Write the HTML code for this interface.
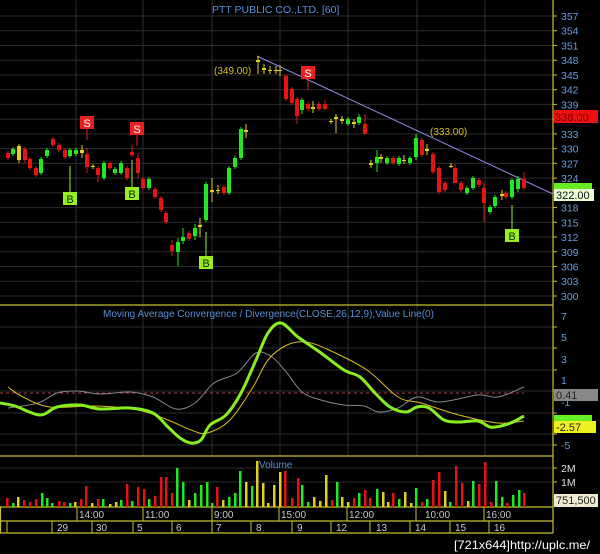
<!DOCTYPE html>
<html><head><meta charset="utf-8"><style>
html,body{margin:0;padding:0;background:#000;width:600px;height:554px;overflow:hidden}
svg{display:block}
text{font-family:"Liberation Sans",sans-serif}
</style></head><body>
<svg id="s" width="600" height="554" viewBox="0 0 600 554" xmlns="http://www.w3.org/2000/svg">
<rect width="600" height="554" fill="#000"/>
<g id="grid" stroke="#2e2e2e" stroke-width="1"></g>
<g stroke="#c8c030" stroke-width="1.2" fill="none">
<line x1="553" y1="0" x2="553" y2="533"/>
<line x1="0" y1="305" x2="553" y2="305"/>
<line x1="0" y1="456" x2="553" y2="456"/>
<line x1="0" y1="507" x2="553" y2="507"/>
<line x1="0" y1="521" x2="553" y2="521"/>
<line x1="0" y1="533" x2="553" y2="533"/>
<line x1="0.5" y1="507" x2="0.5" y2="533"/>
</g>
<g id="axt" stroke="#c8c030" stroke-width="1"></g>
<text x="212" y="13" font-size="10.5" fill="#5a8fd8">PTT PUBLIC CO.,LTD. [60]</text>
<line x1="257" y1="56" x2="553" y2="194" stroke="#8a8ae0" stroke-width="1"/>
<text x="214" y="74" font-size="10" fill="#d8c020">(349.00)</text>
<text x="430" y="135" font-size="10" fill="#d8c020">(333.00)</text>
<g id="cand"></g>
<g stroke="#99ee22" stroke-width="1">
<line x1="70" y1="166" x2="70" y2="192"/><line x1="132" y1="160" x2="132" y2="187"/>
<line x1="206" y1="232" x2="206" y2="256"/><line x1="512" y1="205" x2="512" y2="229"/>
</g>
<g fill="#99ee22"><rect x="63" y="192" width="14" height="13"/><rect x="125" y="187" width="14" height="13"/><rect x="199" y="256" width="14" height="13"/><rect x="505" y="229" width="14" height="13"/></g>
<g font-size="11" fill="#0a2a00" text-anchor="middle"><text x="70" y="203">B</text><text x="132" y="198">B</text><text x="206" y="267">B</text><text x="512" y="240">B</text></g>
<g stroke="#e82020"><line x1="87" y1="129" x2="87" y2="140"/><line x1="137" y1="135" x2="137" y2="146"/><line x1="308" y1="79" x2="308" y2="90"/></g>
<g fill="#e82020"><rect x="80" y="116" width="14" height="13"/><rect x="130" y="122" width="14" height="13"/><rect x="301" y="66" width="14" height="13"/></g>
<g font-size="11" fill="#fff" text-anchor="middle"><text x="87" y="127">S</text><text x="137" y="133">S</text><text x="308" y="77">S</text></g>
<g id="plab" font-size="10.5" fill="#6a9ee0"></g>
<rect x="554" y="110" width="44" height="13" fill="#ee1010"/>
<text x="555" y="121" font-size="11" fill="#700">338.00</text>
<rect x="554" y="183" width="38" height="7" fill="#66ee22"/>
<rect x="554" y="189" width="40" height="12" fill="#e8ffd8"/>
<text x="556" y="199" font-size="11" fill="#111">322.00</text>
<text x="103" y="317" font-size="10" fill="#5a8fd8">Moving Average Convergence / Divergence(CLOSE,26,12,9),Value Line(0)</text>
<line x1="0" y1="393" x2="524" y2="393" stroke="#b04050" stroke-width="1" stroke-dasharray="3,3"/>
<path id="pg" fill="none" stroke="#888" stroke-width="1"/>
<path id="py" fill="none" stroke="#d8c020" stroke-width="1"/>
<path id="pm" fill="none" stroke="#88ee22" stroke-width="3" stroke-linejoin="round"/>
<g font-size="10.5" fill="#6a9ee0"><text x="561" y="320">7</text><text x="561" y="341">5</text><text x="561" y="363">3</text><text x="561" y="384">1</text><text x="561" y="406">-1</text><text x="561" y="449">-5</text></g>
<rect x="554" y="389" width="44" height="12" fill="#888"/>
<text x="556" y="399" font-size="11" fill="#222">0.41</text>
<rect x="554" y="415" width="38" height="7" fill="#66ee22"/>
<rect x="554" y="421" width="42" height="12" fill="#f0f020"/>
<text x="556" y="431" font-size="11" fill="#222">-2.57</text>
<text x="259" y="468" font-size="10" fill="#5a8fd8">Volume</text>
<g id="vol"></g>
<g font-size="10.5" fill="#e0e0e0"><text x="561" y="472">2M</text><text x="561" y="486">1M</text></g>
<rect x="554" y="494" width="44" height="13" fill="#f0ead0"/>
<text x="556" y="504" font-size="11" fill="#222">751,500</text>
<g stroke="#c8c030" stroke-width="1">
<line x1="77" y1="507" x2="77" y2="521"/><line x1="143" y1="507" x2="143" y2="521"/><line x1="212" y1="507" x2="212" y2="533"/><line x1="279" y1="507" x2="279" y2="521"/><line x1="347" y1="507" x2="347" y2="521"/><line x1="416" y1="507" x2="416" y2="521"/><line x1="484" y1="507" x2="484" y2="521"/>
<line x1="7" y1="521" x2="7" y2="533"/><line x1="52" y1="521" x2="52" y2="533"/><line x1="92" y1="521" x2="92" y2="533"/><line x1="133" y1="521" x2="133" y2="533"/><line x1="172" y1="521" x2="172" y2="533"/><line x1="251" y1="521" x2="251" y2="533"/><line x1="292" y1="521" x2="292" y2="533"/><line x1="331" y1="521" x2="331" y2="533"/><line x1="370" y1="521" x2="370" y2="533"/><line x1="410" y1="521" x2="410" y2="533"/><line x1="450" y1="521" x2="450" y2="533"/><line x1="489" y1="521" x2="489" y2="533"/>
</g>
<g font-size="10" fill="#c8c8c8"><text x="79" y="518">14:00</text><text x="145" y="518">11:00</text><text x="214" y="518">9:00</text><text x="281" y="518">15:00</text><text x="349" y="518">12:00</text><text x="425" y="518">10:00</text><text x="486" y="518">16:00</text>
<text x="57" y="531">29</text><text x="96" y="531">30</text><text x="137" y="531">5</text><text x="176" y="531">6</text><text x="216" y="531">7</text><text x="256" y="531">8</text><text x="297" y="531">9</text><text x="336" y="531">12</text><text x="376" y="531">13</text><text x="415" y="531">14</text><text x="455" y="531">15</text><text x="494" y="531">16</text></g>
<text x="454" y="549" font-size="12" fill="#fff" font-family="Liberation Mono,monospace" textLength="136" lengthAdjust="spacingAndGlyphs">[721x644]http://uplc.me/</text>
</svg>
<script>
var NS="http://www.w3.org/2000/svg";
function el(p,t,a){var e=document.createElementNS(NS,t);for(var k in a)e.setAttribute(k,a[k]);document.getElementById(p).appendChild(e);return e;}
function smooth(id,pts){var p=pts.split(' ').map(function(q){return q.split(',').map(Number);});var d='M'+p[0][0]+','+p[0][1];
for(var i=0;i<p.length-1;i++){var p0=p[i-1]||p[i],p1=p[i],p2=p[i+1],p3=p[i+2]||p2;
d+=' C'+(p1[0]+(p2[0]-p0[0])/6)+','+(p1[1]+(p2[1]-p0[1])/6)+' '+(p2[0]-(p3[0]-p1[0])/6)+','+(p2[1]-(p3[1]-p1[1])/6)+' '+p2[0]+','+p2[1];}
document.getElementById(id).setAttribute('d',d);}
smooth('pg',"8,408 38,403 57,393 77,391 100,394 130,392 153,397 176,409 195,403 214,383 237,373 256,353 272,357 287,373 302,392 321,400 344,405 364,406 379,412 398,408 417,397 440,402 478,395 498,397 524,387");
smooth('py',"8,387 23,397 50,407 96,406 138,410 168,420 191,430 207,433 230,420 253,387 268,360 287,345 306,342 329,350 367,370 398,397 421,403 459,415 498,423 524,421");
smooth('pm',"0,403 15,406 40,415 57,407 80,405 100,409 130,408 153,413 168,427 180,438 191,443 201,440 210,425 226,415 241,393 256,360 268,333 281,323 298,337 321,353 344,370 360,377 375,393 390,407 406,412 417,407 429,408 444,420 459,422 478,421 490,427 501,426 513,422 524,416");
var lab=[357,354,351,348,345,342,339,336,333,330,327,324,321,318,315,312,309,306,303,300];
lab.forEach(function(p){var y=16+(357-p)*4.912;el('grid','line',{x1:0,y1:y,x2:553,y2:y});el('axt','line',{x1:553,y1:y,x2:557,y2:y});
if(p!=336&&p!=321)el('plab','text',{x:561,y:y+4}).textContent=p;});
[76,143,212,280,348,417,485].forEach(function(x){el('grid','line',{x1:x,y1:0,x2:x,y2:305});el('grid','line',{x1:x,y1:305,x2:x,y2:456});});
[327,348,370,391,413,434,445].forEach(function(y){el('grid','line',{x1:0,y1:y,x2:553,y2:y});el('axt','line',{x1:553,y1:y,x2:557,y2:y});});
[468,482].forEach(function(y){el('grid','line',{x1:0,y1:y,x2:553,y2:y});el('axt','line',{x1:553,y1:y,x2:557,y2:y});});
var C={r:'#e41414',g:'#22e822',y:'#e0d020'};
var cd=[[8,153,158,'r'],[13,149,154,'g'],[19,146,160,'y',144,163],[25,149,160,'r',147,163],[30,159,168,'r'],[36,168,175,'r'],[41,159,173,'g'],[47,150,156,'g'],[53,139,145,'r'],[59,145,150,'r'],[65,150,157,'r'],[70,150,156,'g'],[76,150,154,'g'],[82,150,153,'y',145,158],[87,154,167,'r',148,173],[93,166,167,'y'],[98,168,175,'r',166,182],[104,163,178,'g'],[110,163,168,'r'],[115,169,173,'g'],[121,163,173,'g'],[127,168,178,'r'],[132,152,155,'r',145,157],[138,158,173,'r',153,178],[143,179,188,'r'],[149,179,188,'g'],[155,189,197,'r'],[161,198,210,'r'],[166,213,222,'r'],[172,245,251,'r',240,256],[178,242,252,'g',238,266],[183,237,241,'g',228,244],[189,233,239,'r'],[195,228,236,'g',224,240],[200,225,227,'y',218,237],[206,184,220,'g'],[212,190,192,'y',178,202],[218,190,191,'y',185,194],[224,187,193,'r'],[229,168,193,'g'],[235,158,167,'g'],[241,129,158,'g'],[246,130,132,'y',124,138],[258,60,62,'y',56,74],[264,68,70,'y',64,74],[270,70,71,'y',66,74],[276,70,71,'y',66,74],[280,70,71,'y',65,76],[286,76,99,'r'],[292,89,103,'r'],[297,99,116,'r',97,124],[302,100,110,'g',98,114],[308,104,109,'r'],[313,107,109,'y',101,113],[319,104,109,'r'],[325,104,109,'r',100,110],[331,121,122,'y'],[336,117,119,'y',114,133],[342,119,121,'y',116,124],[348,119,124,'g'],[354,122,124,'y',119,128],[359,117,123,'g',114,125],[365,124,134,'r',114,134],[371,163,165,'y',160,168],[377,157,163,'g',150,172],[381,157,159,'y',154,163],[387,158,163,'g'],[393,158,163,'r'],[399,158,164,'g'],[404,160,161,'y',155,164],[410,158,163,'g'],[416,138,157,'g',134,160],[422,140,155,'r'],[427,149,151,'y',144,155],[433,154,172,'r'],[439,168,192,'r'],[445,183,190,'r'],[451,166,167,'y',163,168],[455,168,183,'r',164,183],[461,183,190,'r'],[467,188,193,'g'],[473,178,188,'g'],[479,180,185,'r'],[484,188,203,'r',183,222],[490,207,212,'g'],[495,197,206,'g'],[502,194,196,'y',190,200],[506,193,197,'r'],[512,180,197,'g'],[518,179,189,'g',176,192],[524,179,188,'r',172,190]];
cd.forEach(function(c){var col=C[c[3]],wt=c.length>4?c[4]:c[1]-2,wb=c.length>4?c[5]:c[2]+2;
el('cand','rect',{x:c[0]-0.5,y:wt,width:1,height:wb-wt,fill:col});
el('cand','rect',{x:c[0]-2,y:c[1],width:4,height:Math.max(1,c[2]-c[1]),fill:col});});
var vd=[[7,498,'r'],[13,503,'g'],[18,497,'y'],[24,500,'r'],[30,502,'r'],[36,499,'r'],[42,493,'g'],[47,498,'g'],[52,503,'g'],[59,501,'r'],[64,502,'r'],[70,503,'g'],[75,502,'y'],[81,499,'r'],[86,486,'r'],[92,503,'y'],[98,499,'r'],[103,499,'g'],[110,504,'y'],[116,502,'y'],[121,500,'g'],[127,484,'r'],[132,501,'g'],[138,487,'r'],[144,489,'r'],[149,499,'g'],[155,496,'r'],[161,477,'r'],[166,477,'r'],[172,493,'r'],[177,468,'g'],[183,482,'g'],[189,500,'y'],[195,493,'g'],[201,485,'g'],[207,482,'g'],[212,503,'g'],[217,487,'r'],[223,500,'y'],[229,497,'g'],[235,493,'g'],[240,471,'g'],[246,482,'y'],[252,486,'g'],[257,461,'y'],[263,483,'y'],[268,503,'y'],[274,485,'y'],[280,472,'y'],[285,471,'r'],[292,498,'r'],[298,478,'r'],[302,485,'g'],[308,502,'g'],[314,497,'y'],[320,501,'y'],[326,475,'y'],[332,500,'r'],[337,482,'g'],[342,497,'y'],[348,502,'y'],[354,498,'r'],[359,493,'g'],[365,490,'r'],[370,498,'r'],[377,489,'g'],[383,492,'y'],[388,502,'y'],[393,493,'r'],[399,499,'g'],[405,492,'y'],[411,503,'y'],[416,488,'g'],[422,502,'r'],[427,499,'g'],[433,480,'r'],[439,472,'r'],[445,491,'y'],[450,502,'g'],[456,466,'r'],[462,483,'r'],[468,501,'y'],[473,481,'g'],[479,484,'r'],[485,462,'r'],[491,502,'r'],[496,481,'g'],[502,497,'g'],[507,503,'r'],[513,495,'g'],[519,490,'g'],[524,493,'r']];
vd.forEach(function(v){el('vol','rect',{x:v[0]-1,y:v[1],width:2.5,height:507-v[1],fill:C[v[2]]});});
</script>
</body></html>
